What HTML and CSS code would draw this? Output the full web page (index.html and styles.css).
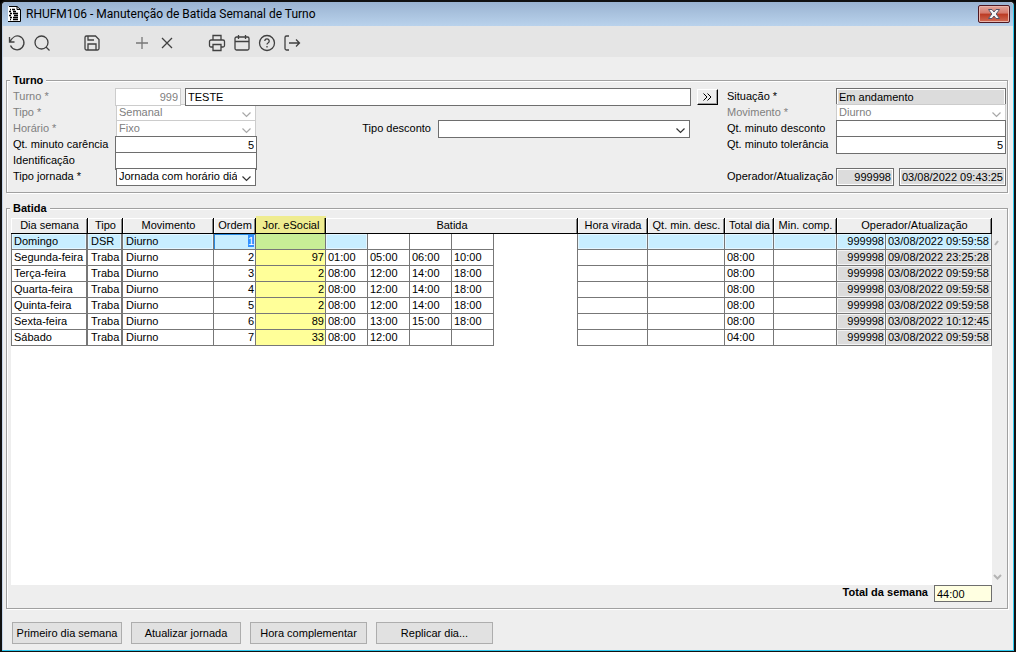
FILE: index.html
```html
<!DOCTYPE html>
<html lang="pt-BR">
<head>
    <meta charset="UTF-8">
    <meta name="viewport" content="width=device-width, initial-scale=1.0">
    <title>RHUFM106 - Manutenção de Batida Semanal de Turno</title>
    <link rel="stylesheet" href="styles.css">
</head>
<body>
    <div class="window">
        <header class="title-bar">
            <svg class="app-icon" width="13" height="16" viewBox="0 0 13 16">
                <path d="M.5 .5h8.500l3 3v12H.5z" fill="#fff" stroke="#fff"/>
                <path d="M0 15.500h12.500V3.500L9 .5H1" fill="none" stroke="#000"/>
                <path d="M9 .5v3h3" fill="none" stroke="#000"/>
                <path d="M2 3.500h1M4 3.500h3M1 5.500h2M5 5.500h3M2 7.500h2M5 7.500h5M1 9.500h2M6 9.500h4M2 11.500h2M5 11.500h5M2 13.500h1M5 13.500h5" stroke="#000" stroke-width="1.300"/>
            </svg>
            <h1>RHUFM106 - Manutenção de Batida Semanal de Turno</h1>
            <button class="close-btn" aria-label="Fechar">
                <svg width="12" height="10" viewBox="0 0 12 10">
                    <path d="M.5 .5h3.500L6 3l2-2.500h3.500L8.200 5l3.300 4.500H8L6 7 4 9.500H.5L3.800 5z" fill="#f4f4f4" stroke="#55566a"/>
                </svg>
            </button>
        </header>

        <nav class="toolbar">
            <button aria-label="Desfazer"><svg viewBox="0 0 18 18"><path d="M1.500 3v5h5M2 8C4 3 8 1.500 11 2.100a7 7 0 1 1-8.500 9.400"/></svg></button>
            <button aria-label="Pesquisar"><svg viewBox="0 0 18 18"><circle cx="8.500" cy="8.500" r="6.500"/><path d="M13 13l3.500 3.500"/></svg></button>
            <button class="gap" aria-label="Salvar"><svg viewBox="0 0 18 18"><path d="M2 3.500A1.500 1.500 0 0 1 3.500 2h9L16 5.500v9a1.500 1.500 0 0 1-1.500 1.500h-11A1.500 1.500 0 0 1 2 14.500zM5 16v-6h8v6M5 2v4h6"/></svg></button>
            <button class="gap muted" aria-label="Adicionar"><svg viewBox="0 0 18 18"><path d="M9 3v12M3 9h12"/></svg></button>
            <button aria-label="Excluir"><svg viewBox="0 0 18 18"><path d="M4 4l10 10M14 4L4 14"/></svg></button>
            <button class="gap" aria-label="Imprimir"><svg viewBox="0 0 18 18"><path d="M5 6V1.500h8V6M5 13H3a1.500 1.500 0 0 1-1.500-1.500v-4A1.500 1.500 0 0 1 3 6h12a1.500 1.500 0 0 1 1.500 1.500v4A1.500 1.500 0 0 1 15 13h-2M5 10.500h8v6H5z"/></svg></button>
            <button aria-label="Calendário"><svg viewBox="0 0 18 18"><rect x="2" y="3" width="14" height="13" rx="1.500"/><path d="M2 7.500h14M5.500 1v4M12.500 1v4"/></svg></button>
            <button aria-label="Ajuda"><svg viewBox="0 0 18 18"><circle cx="9" cy="9" r="7.500"/><path d="M6.800 7a2.200 2.200 0 1 1 3.500 1.800Q9 9.500 9 10.500M9 12v1.500"/></svg></button>
            <button aria-label="Sair"><svg viewBox="0 0 18 18"><path d="M6 2H3.500A1.500 1.500 0 0 0 2 3.500v11A1.500 1.500 0 0 0 3.500 16H6M6 9h10.500M13 5.500L16.500 9 13 12.500"/></svg></button>
        </nav>

        <main>
            <fieldset class="turno">
                <legend>Turno</legend>
                <div class="form-left">
                    <label class="off" for="turno">Turno *</label>
                    <div class="turno-row">
                        <input class="num code" id="turno" value="999" disabled>
                        <input class="name" aria-label="Descrição" value="TESTE">
                        <button class="more-btn" aria-label="Mais"><svg width="9" height="8" viewBox="0 0 9 8"><path d="M.5 .5L4 4 .5 7.500M4.500 .5L8 4 4.500 7.500"/></svg></button>
                    </div>

                    <label class="off" for="tipo">Tipo *</label>
                    <select class="main-field" id="tipo" disabled><option>Semanal</option></select>

                    <label class="off" for="horario">Horário *</label>
                    <select class="main-field" id="horario" disabled><option>Fixo</option></select>
                    <label class="desc-label" for="desconto">Tipo desconto</label>
                    <select id="desconto"><option></option></select>

                    <label for="carencia">Qt. minuto carência</label>
                    <input class="num" id="carencia" value="5">

                    <label for="ident">Identificação</label>
                    <input id="ident">

                    <label for="jornada">Tipo jornada *</label>
                    <select class="main-field" id="jornada"><option>Jornada com horário diário</option></select>
                </div>

                <div class="form-right">
                    <label for="situacao">Situação *</label>
                    <input class="readonly" id="situacao" value="Em andamento" readonly>

                    <label class="off" for="mov">Movimento *</label>
                    <select id="mov" disabled><option>Diurno</option></select>

                    <label for="qtdesc">Qt. minuto desconto</label>
                    <input id="qtdesc">

                    <label for="qttol">Qt. minuto tolerância</label>
                    <input class="num" id="qttol" value="5">

                    <label class="last-row" for="oper">Operador/Atualização</label>
                    <div class="oper-row last-row">
                        <input class="readonly num oper" id="oper" value="999998" readonly>
                        <input class="readonly stamp" aria-label="Atualização" value="03/08/2022 09:43:25" readonly>
                    </div>
                </div>
            </fieldset>

            <fieldset class="batida">
                <legend>Batida</legend>
                <div class="grid-box">
                    <div class="grid">
                        <table>
                            <colgroup>
                                <col class="c-dia"><col class="c-tipo"><col class="c-mov"><col class="c-hora"><col class="c-jor">
                                <col class="c-hora"><col class="c-hora"><col class="c-hora"><col class="c-hora"><col class="c-blank">
                                <col class="c-jor"><col class="c-dia"><col class="c-total"><col class="c-min"><col class="c-total"><col class="c-stamp">
                            </colgroup>
                            <thead>
                                <tr>
                                    <th>Dia semana</th><th>Tipo</th><th>Movimento</th><th>Ordem</th><th class="hl">Jor. eSocial</th>
                                    <th colspan="5">Batida</th>
                                    <th>Hora virada</th><th>Qt. min. desc.</th><th>Total dia</th><th>Min. comp.</th>
                                    <th colspan="2">Operador/Atualização</th>
                                </tr>
                            </thead>
                            <tbody>
                                <tr class="current">
                                    <td class="thick">Domingo</td><td class="thick">DSR</td><td>Diurno</td><td class="num active"><span class="selected">1</span></td><td class="num hl"></td>
                                    <td></td><td class="plain"></td><td class="plain"></td><td class="plain"></td><td class="blank"></td>
                                    <td></td><td></td><td></td><td></td><td class="num ro">999998</td><td class="ro">03/08/2022 09:59:58</td>
                                </tr>
                                <tr>
                                    <td class="thick">Segunda-feira</td><td class="thick">Traba</td><td>Diurno</td><td class="num">2</td><td class="num hl">97</td>
                                    <td>01:00</td><td>05:00</td><td>06:00</td><td>10:00</td><td class="blank"></td>
                                    <td></td><td></td><td>08:00</td><td></td><td class="num ro">999998</td><td class="ro">09/08/2022 23:25:28</td>
                                </tr>
                                <tr>
                                    <td class="thick">Terça-feira</td><td class="thick">Traba</td><td>Diurno</td><td class="num">3</td><td class="num hl">2</td>
                                    <td>08:00</td><td>12:00</td><td>14:00</td><td>18:00</td><td class="blank"></td>
                                    <td></td><td></td><td>08:00</td><td></td><td class="num ro">999998</td><td class="ro">03/08/2022 09:59:58</td>
                                </tr>
                                <tr>
                                    <td class="thick">Quarta-feira</td><td class="thick">Traba</td><td>Diurno</td><td class="num">4</td><td class="num hl">2</td>
                                    <td>08:00</td><td>12:00</td><td>14:00</td><td>18:00</td><td class="blank"></td>
                                    <td></td><td></td><td>08:00</td><td></td><td class="num ro">999998</td><td class="ro">03/08/2022 09:59:58</td>
                                </tr>
                                <tr>
                                    <td class="thick">Quinta-feira</td><td class="thick">Traba</td><td>Diurno</td><td class="num">5</td><td class="num hl">2</td>
                                    <td>08:00</td><td>12:00</td><td>14:00</td><td>18:00</td><td class="blank"></td>
                                    <td></td><td></td><td>08:00</td><td></td><td class="num ro">999998</td><td class="ro">03/08/2022 09:59:58</td>
                                </tr>
                                <tr>
                                    <td class="thick">Sexta-feira</td><td class="thick">Traba</td><td>Diurno</td><td class="num">6</td><td class="num hl">89</td>
                                    <td>08:00</td><td>13:00</td><td>15:00</td><td>18:00</td><td class="blank"></td>
                                    <td></td><td></td><td>08:00</td><td></td><td class="num ro">999998</td><td class="ro">03/08/2022 10:12:45</td>
                                </tr>
                                <tr>
                                    <td class="thick">Sábado</td><td class="thick">Traba</td><td>Diurno</td><td class="num">7</td><td class="num hl">33</td>
                                    <td>08:00</td><td>12:00</td><td></td><td></td><td class="blank"></td>
                                    <td></td><td></td><td>04:00</td><td></td><td class="num ro">999998</td><td class="ro">03/08/2022 09:59:58</td>
                                </tr>
                            </tbody>
                        </table>
                    </div>
                    <div class="scrollbar">
                        <svg width="11" height="11" viewBox="0 0 11 11"><path d="M3 8l3-4"/></svg>
                        <svg width="11" height="11" viewBox="0 0 11 11"><path d="M2 4l3.500 3.500L9 4"/></svg>
                    </div>
                </div>
                <div class="total-row">
                    <label for="total">Total da semana</label>
                    <input id="total" value="44:00" readonly>
                </div>
            </fieldset>
        </main>

        <footer class="actions">
            <button>Primeiro dia semana</button>
            <button>Atualizar jornada</button>
            <button class="wide">Hora complementar</button>
            <button class="wide">Replicar dia...</button>
        </footer>
    </div>
</body>
</html>
```
FILE: styles.css
```css
* {
    margin: 0;
    padding: 0;
    box-sizing: border-box;
}

body {
    font-family: "Liberation Sans", Arial, sans-serif;
    font-size: 11px;
    line-height: 13px;
    color: #000;
    background: #000;
}

.window {
    display: flex;
    flex-direction: column;
    height: 100vh;
    background: #eee;
    border-style: solid;
    border-width: 2px 2px 1px 2px;
    border-color: #111;
    border-radius: 6px 6px 0 0;
    box-shadow: inset -1px -1px #2fc8ee, inset 1px 0 #c4d4e8;
}

input,
select,
button {
    font: inherit;
    color: inherit;
    border-radius: 0;
    outline: none;
}

/* Title bar */
.title-bar {
    display: flex;
    align-items: center;
    gap: 5px;
    height: 24px;
    margin-right: 1px;
    padding: 0 3px 0 6px;
    background: linear-gradient(#9ab3d1, #b9d2ec);
    border-radius: 4px 4px 0 0;
}

.title-bar h1 {
    flex: 1;
    font-family: Roboto, "Segoe UI", sans-serif;
    font-size: 12px;
    font-weight: 400;
}

.close-btn {
    display: flex;
    align-items: center;
    justify-content: center;
    width: 32px;
    height: 18px;
    border: 1px solid #4e1822;
    border-radius: 2px;
    background: linear-gradient(#e3a49a 0, #d5796b 45%, #bb3a22 50%, #cf6b55 100%);
    box-shadow: inset 0 0 0 1px #e9b5ab;
}

/* Toolbar */
.toolbar {
    display: flex;
    align-items: center;
    gap: 7px;
    height: 31px;
    margin: 0 1px;
    padding: 3px 5px 0;
    background: #e5e5e5;
}

.toolbar button {
    width: 18px;
    height: 18px;
    border: 0;
    background: none;
}

.toolbar svg {
    display: block;
    fill: none;
    stroke: #404040;
    stroke-width: 1.3;
}

.toolbar .gap {
    margin-left: 25px;
}

.toolbar .muted svg {
    stroke: #777;
}

/* Groups */
main {
    flex: 1;
    display: flex;
    flex-direction: column;
    gap: 9px;
    padding: 17px 6px 0 4px;
}

fieldset {
    min-width: 0;
    border: 1px solid #a0a0a0;
    box-shadow: inset 1px 1px #fff, 1px 1px #fff;
}

legend {
    margin-left: -1px;
    padding: 0 3px;
    font-weight: 700;
    background: #eee;
}

input,
select {
    width: 100%;
    height: 18px;
    padding: 0 2px;
    border: 1px solid #6e6e6e;
    background-color: #fff;
}

select {
    appearance: none;
    padding: 0 18px 2px 2px;
    background-image: url("data:image/svg+xml,%3Csvg xmlns='http://www.w3.org/2000/svg' width='9' height='6'%3E%3Cpath d='M.5 .5l4 4 4-4' fill='none' stroke='%23333' stroke-width='1.2'/%3E%3C/svg%3E");
    background-repeat: no-repeat;
    background-position: right 4px top 7px;
}

input:disabled,
select:disabled {
    color: #808080;
    border-color: #ccc;
    opacity: 1;
}

select:disabled {
    background-image: url("data:image/svg+xml,%3Csvg xmlns='http://www.w3.org/2000/svg' width='9' height='6'%3E%3Cpath d='M.5 .5l4 4 4-4' fill='none' stroke='%23a8a8a8' stroke-width='1.2'/%3E%3C/svg%3E");
}

.num {
    text-align: right;
}

.off {
    color: #808080;
}

.readonly {
    background-color: #dcdcdc;
    box-shadow: inset 0 0 0 1px #fff;
}

/* Turno */
.turno {
    display: flex;
    gap: 9px;
    padding: 1px 1px 8px 4px;
}

.form-left,
.form-right {
    display: grid;
    grid-auto-rows: 16px;
}

.form-left {
    flex: 1;
    grid-template-columns: 102px 142px 1fr 252px 28px;
    padding-left: 2px;
}

.form-right {
    grid-template-columns: 109px 170px;
}

.turno label {
    grid-column: 1;
    padding-top: 2px;
}

.turno .desc-label {
    grid-column: 3;
    padding-right: 7px;
    text-align: right;
}

.turno-row {
    grid-column: 2 / 6;
    display: flex;
    position: relative;
    z-index: 1;
}

.turno-row .code {
    width: 66px;
    margin-right: 4px;
}

.turno-row .name {
    flex: 1;
    margin-right: 6px;
}

.main-field {
    width: 140px;
    margin-left: 1px;
}

.more-btn {
    width: 21px;
    height: 16px;
    margin-top: 1px;
    border: 1px solid;
    border-color: #fff #000 #000 #fff;
    background: #eee;
    box-shadow: inset -1px -1px #a0a0a0;
}

.more-btn svg {
    display: block;
    margin: 0 auto;
    fill: none;
    stroke: #000;
}

.last-row {
    grid-row: 6;
}

.oper-row {
    display: flex;
    gap: 5px;
}

.oper-row .oper {
    width: 58px;
}

.oper-row .stamp {
    flex: 1;
}

/* Batida */
.batida {
    flex: 1;
    display: flex;
    flex-direction: column;
    padding: 3px 4px 6px;
}

.grid-box {
    flex: 1;
    display: flex;
}

.grid {
    flex: 1;
    background: #fff;
}

.scrollbar {
    display: flex;
    flex-direction: column;
    justify-content: space-between;
    width: 11px;
    padding: 19px 0 3px;
}

.scrollbar svg {
    fill: none;
    stroke: #b4b4b4;
    stroke-width: 2;
}

table {
    width: 100%;
    table-layout: fixed;
    border-collapse: separate;
    border-spacing: 0;
}

.c-dia { width: 77px; }
.c-tipo { width: 35px; }
.c-mov { width: 91px; }
.c-hora { width: 42px; }
.c-jor { width: 70px; }
.c-blank { width: 84px; }
.c-total { width: 49px; }
.c-min { width: 63px; }
.c-stamp { width: 106px; }

th {
    height: 16px;
    padding-left: 1px;
    font-weight: 400;
    white-space: nowrap;
    background: #eee;
    border-right: 1px solid #000;
    border-bottom: 1px solid #000;
    box-shadow: inset 1px 1px #fff, inset -1px 0 #888;
}

th.hl {
    background: #efec90;
    box-shadow: 0 -2px #efec90, inset -1px 0 #8a8a4a;
}

td {
    height: 16px;
    padding: 0 1px 0 2px;
    overflow: hidden;
    white-space: nowrap;
    background: #fff;
    border-right: 1px solid #777;
    border-bottom: 1px solid #777;
}

td:first-child {
    border-left: 1px solid #777;
}

td.thick {
    border-right-width: 2px;
}

td.thick + td {
    padding-left: 3px;
}

td.hl {
    background: #ffff99;
}

td.ro {
    background: #dcdcdc;
    box-shadow: inset 0 0 0 1px #f4f4f4;
}

td.blank {
    border-bottom: 0;
}

.current td {
    background: #c8eeff;
    box-shadow: inset 0 0 0 1px #e4f6ff;
}

.current td.plain,
.current td.blank {
    background: #fff;
    box-shadow: none;
}

.current td.hl {
    background: #c8ee96;
    box-shadow: none;
}

.current td.active {
    box-shadow: inset 1px 1px #2a8ae0;
}

.selected {
    color: #fff;
    background: #3390ff;
}

.total-row {
    display: flex;
    justify-content: flex-end;
    gap: 6px;
    padding-right: 11px;
}

.total-row label {
    padding-top: 1px;
    font-weight: 700;
}

.total-row input {
    width: 58px;
    height: 17px;
    background: #ffffe1;
}

/* Bottom buttons */
.actions {
    display: flex;
    gap: 9px;
    padding: 13px 10px 7px;
}

.actions button {
    width: 110px;
    height: 22px;
    border: 1px solid #adadad;
    background: #e1e1e1;
}

.actions .wide {
    width: 117px;
}
```
